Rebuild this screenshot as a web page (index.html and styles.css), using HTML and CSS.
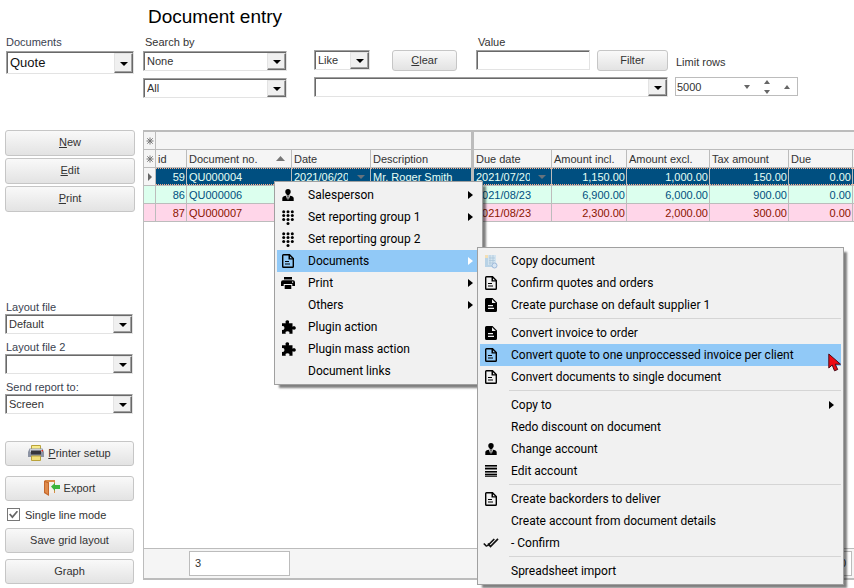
FILE: index.html
```html
<!DOCTYPE html>
<html lang="en">
<head>
<meta charset="utf-8">
<title>Document entry</title>
<link rel="stylesheet" href="styles.css">
</head>
<body>
<svg class="defs" aria-hidden="true">
  <symbol id="i-person" viewBox="0 0 12 12"><circle cx="6" cy="2.7" r="2.7"/><path d="M4.6 5h2.800v1.500H4.600zM.3 12V9.200C.3 7.600 2 7 4 6.700L5.300 11l.4-3-.5-1h1.600l-.5 1 .4 3L8 6.700c2 .3 3.700.9 3.700 2.500V12z"/></symbol>
  <symbol id="i-dots" viewBox="0 0 12 15"><g><circle cx="1.7" cy="1.7" r="1.5"/><circle cx="6" cy="1.7" r="1.5"/><circle cx="10.3" cy="1.7" r="1.5"/><circle cx="1.7" cy="5.6" r="1.5"/><circle cx="6" cy="5.6" r="1.5"/><circle cx="10.3" cy="5.6" r="1.5"/><circle cx="1.7" cy="9.5" r="1.5"/><circle cx="6" cy="9.5" r="1.5"/><circle cx="10.3" cy="9.5" r="1.5"/><circle cx="6" cy="13.4" r="1.5"/></g></symbol>
  <symbol id="i-doc" viewBox="0 0 12 14"><path d="M1.500.7h6l3.800 3.800v8q0 .8-.8.8h-9q-.8 0-.8-.8v-11q0-.8.8-.8z" fill="none" stroke="#000" stroke-width="1.400"/><path d="M6.500 1H8v3.200h3v1.300H6.500zM3 7h4v1H3zM3 9.500h5v1H3z"/></symbol>
  <symbol id="i-docfill" viewBox="0 0 12 14"><path fill-rule="evenodd" d="M1.500 0H7.500L12 4.500V12.500Q12 14 10.500 14H1.500Q0 14 0 12.500V1.500Q0 0 1.500 0zM7 1.200V5h3.800zM3 7v1.200h5V7zM3 9.800V11h6V9.800z"/></symbol>
  <symbol id="i-print" viewBox="0 0 14 12"><path fill-rule="evenodd" d="M3 0h8v2.500H3zM2 3.300h10q2 0 2 2V9h-2.700V7H2.700v2H0V5.300q0-2 2-2zM11 4.500v1.200h1.200V4.500zM3.700 8h6.600v4H3.700z"/></symbol>
  <symbol id="i-puzzle" viewBox="0 0 15 14"><path d="M1 3.200h3.800C4 1.500 4.800.2 6.300.2s2.400 1.300 1.500 3h3.700v3.500c1.800-.9 3.300-.2 3.300 1.300s-1.500 2.200-3.300 1.300v4.500H8.300c.7-1.700-.3-2.500-1.800-2.500s-2.500.8-1.700 2.500H1v-4.100c1.600.6 2.400-.3 2.400-1.700S2.600 5.700 1 6.300z"/></symbol>
  <symbol id="i-lines" viewBox="0 0 12 12"><path d="M0 0h12v1.500H0zM0 3h12v1.500H0zM0 6h12v1.500H0zM0 9h12v1.500H0zM0 11.200h12v.8H0z"/><path d="M0 1.500h12V3H0zM0 7.500h12V9H0z" opacity=".35"/></symbol>
  <symbol id="i-checks" viewBox="0 0 16 10"><path d="M.8 5.500l3 3M5 5.500l2.500 3L15 .8M4.300 8l7-7" fill="none" stroke="#111" stroke-width="1.700"/></symbol>
  <symbol id="i-copy" viewBox="0 0 14 15"><path d="M1 3h8v10H1z" fill="#b9d3e6"/><path d="M4 1h8v10H4z" fill="#d3e4f0"/><path d="M1 1h3v3H1z" fill="#f3dfb5"/><path d="M5 4h6M5 6.500h6M5 9h4M6 1v10M9 1v8" stroke="#a9c4d8" stroke-width=".7"/><circle cx="10.500" cy="11.500" r="2.500" fill="#d8e6f3" stroke="#9db9da"/></symbol>
  <symbol id="i-star" viewBox="0 0 8 8"><path d="M4 .500v7M.5 4h7M1.300 1.300l5.400 5.400M6.700 1.300L1.300 6.700" stroke="#777" stroke-width="1"/></symbol>
</svg>

<div class="app">
  <aside class="sidebar">
    <div class="field field-large">
      <label for="doc">Documents</label>
      <span class="select"><select id="doc"><option>Quote</option></select></span>
    </div>
    <div class="actions">
      <button class="btn"><span><u>N</u>ew</span></button>
      <button class="btn"><span><u>E</u>dit</span></button>
      <button class="btn"><span><u>P</u>rint</span></button>
    </div>
    <div class="layouts">
      <div class="field"><label for="lay1">Layout file</label><span class="select"><select id="lay1"><option>Default</option></select></span></div>
      <div class="field"><label for="lay2">Layout file 2</label><span class="select"><select id="lay2"><option></option></select></span></div>
      <div class="field"><label for="send">Send report to:</label><span class="select"><select id="send"><option>Screen</option></select></span></div>
    </div>
    <div class="output">
      <button class="btn"><svg width="16" height="16" viewBox="0 0 16 16"><path d="M3.500.5h9V5h-9z" fill="#f9ec8c" stroke="#b9a23a"/><path d="M1.500 3.500h13L16 7v5H0V7z" fill="#8c93a3"/><path d="M2 4h12v3H2z" fill="#c9cdd6"/><path d="M3 5.500h10v4H3z" fill="#34343c"/><path d="M13.500 5h1.500v1.500h-1.500z" fill="#e02a1c"/><path d="M3.500 11h9v4.500h-9z" fill="#f1df7a" stroke="#b9a23a"/></svg><span><u>P</u>rinter setup</span></button>
      <button class="btn export"><svg width="16" height="16" viewBox="0 0 16 16"><path d="M1 0h10v13H1z" fill="#d98a45"/><path d="M5 2h5v11H5z" fill="#f4efe8"/><path d="M0 .5l5 2V16l-5-3z" fill="#c4672b"/><path d="M1 2l3 1.200v11L1 12z" fill="#df8b4c"/><path d="M7 6.500L11 3v2h5v4h-5v2z" fill="#3cb53c"/></svg><span>Export</span></button>
      <label class="check"><input type="checkbox" checked><span>Single line mode</span></label>
      <button class="btn save">Save grid layout</button>
      <button class="btn">Graph</button>
    </div>
  </aside>

  <main class="main">
    <h1>Document entry</h1>
    <form class="toolbar">
      <div class="search">
        <label for="by">Search by</label>
        <span class="select"><select id="by"><option>None</option></select></span>
        <span class="select"><select aria-label="Status"><option>All</option></select></span>
      </div>
      <div class="filter">
        <div class="filter-row">
          <span class="select like"><select aria-label="Operator"><option>Like</option></select></span>
          <button type="button" class="btn clear"><span><u>C</u>lear</span></button>
          <div class="value"><label for="val">Value</label><input id="val" type="text" class="sunken"></div>
          <button type="button" class="btn apply">Filter</button>
        </div>
        <span class="select"><select aria-label="Saved filter"><option></option></select></span>
      </div>
      <div class="limit">
        <label for="lim">Limit rows</label>
        <div class="spinner">
          <input id="lim" type="text" value="5000">
          <svg width="8" height="4" viewBox="0 0 8 4"><path d="M1 0h6L4 4z"/></svg>
          <svg width="8" height="14" viewBox="0 0 8 14"><path d="M1 4h6L4 0zM1 10h6l-3 4z"/></svg>
          <svg width="8" height="4" viewBox="0 0 8 4"><path d="M1 4h6L4 0z"/></svg>
        </div>
      </div>
    </form>

    <section class="grid">
      <table>
        <colgroup><col class="c-mark"><col class="c-id"><col class="c-no"><col class="c-date"><col class="c-desc"><col class="c-duedate"><col class="c-incl"><col class="c-excl"><col class="c-tax"><col class="c-due"><col></colgroup>
        <thead>
          <tr><th class="mark"><svg width="8" height="8"><use href="#i-star"/></svg></th><th colspan="4" class="split"></th><th colspan="6"></th></tr>
          <tr><th class="mark"><svg width="8" height="8"><use href="#i-star"/></svg></th><th>id</th><th><div class="sorted">Document no.<svg width="9" height="5" viewBox="0 0 9 5"><path d="M0 5h9L4.500 0z"/></svg></div></th><th>Date</th><th class="split">Description</th><th>Due date</th><th>Amount incl.</th><th>Amount excl.</th><th>Tax amount</th><th>Due</th><th></th></tr>
        </thead>
        <tbody>
          <tr class="selected"><td class="mark"><svg width="4" height="8" viewBox="0 0 4 8"><path d="M0 0v8l4-4z"/></svg></td><td class="num">59</td><td>QU000004</td><td><div class="date"><span>2021/06/20</span><svg width="8" height="4" viewBox="0 0 8 4"><path d="M0 0h8L4 4z"/></svg></div></td><td class="split">Mr. Roger Smith</td><td><div class="date"><span>2021/07/20</span><svg width="8" height="4" viewBox="0 0 8 4"><path d="M0 0h8L4 4z"/></svg></div></td><td class="num">1,150.00</td><td class="num">1,000.00</td><td class="num">150.00</td><td class="num">0.00</td><td></td></tr>
          <tr class="mint"><td class="mark"></td><td class="num">86</td><td>QU000006</td><td></td><td class="split"></td><td>2021/08/23</td><td class="num">6,900.00</td><td class="num">6,000.00</td><td class="num">900.00</td><td class="num">0.00</td><td></td></tr>
          <tr class="pink"><td class="mark"></td><td class="num">87</td><td>QU000007</td><td></td><td class="split"></td><td>2021/08/23</td><td class="num">2,300.00</td><td class="num">2,000.00</td><td class="num">300.00</td><td class="num">0.00</td><td></td></tr>
        </tbody>
      </table>
      <footer class="totals"><output class="count">3</output><output class="sum">0</output></footer>
    </section>
  </main>

  <div class="menu context" role="menu">
    <button class="item" role="menuitem"><i><svg width="12" height="12"><use href="#i-person"/></svg></i>Salesperson<b></b></button>
    <button class="item" role="menuitem"><i><svg width="12" height="15"><use href="#i-dots"/></svg></i>Set reporting group 1<b></b></button>
    <button class="item" role="menuitem"><i><svg width="12" height="15"><use href="#i-dots"/></svg></i>Set reporting group 2</button>
    <button class="item active" role="menuitem"><i><svg width="12" height="14"><use href="#i-doc"/></svg></i>Documents<b></b></button>
    <button class="item" role="menuitem"><i><svg width="14" height="12"><use href="#i-print"/></svg></i>Print<b></b></button>
    <button class="item" role="menuitem"><i></i>Others<b></b></button>
    <button class="item" role="menuitem"><i><svg width="15" height="14"><use href="#i-puzzle"/></svg></i>Plugin action</button>
    <button class="item" role="menuitem"><i><svg width="15" height="14"><use href="#i-puzzle"/></svg></i>Plugin mass action</button>
    <button class="item" role="menuitem"><i></i>Document links</button>
  </div>

  <div class="menu submenu" role="menu">
    <button class="item" role="menuitem"><i><svg width="14" height="15"><use href="#i-copy"/></svg></i>Copy document</button>
    <button class="item" role="menuitem"><i><svg width="12" height="14"><use href="#i-doc"/></svg></i>Confirm quotes and orders</button>
    <button class="item" role="menuitem"><i><svg width="12" height="14"><use href="#i-docfill"/></svg></i>Create purchase on default supplier 1</button>
    <hr>
    <button class="item" role="menuitem"><i><svg width="12" height="14"><use href="#i-docfill"/></svg></i>Convert invoice to order</button>
    <button class="item active" role="menuitem"><i><svg width="12" height="14"><use href="#i-doc"/></svg></i>Convert quote to one unproccessed invoice per client</button>
    <button class="item" role="menuitem"><i><svg width="12" height="14"><use href="#i-doc"/></svg></i>Convert documents to single document</button>
    <hr>
    <button class="item" role="menuitem"><i></i>Copy to<b></b></button>
    <button class="item" role="menuitem"><i></i>Redo discount on document</button>
    <button class="item" role="menuitem"><i><svg width="12" height="12"><use href="#i-person"/></svg></i>Change account</button>
    <button class="item" role="menuitem"><i><svg width="12" height="12"><use href="#i-lines"/></svg></i>Edit account</button>
    <hr>
    <button class="item" role="menuitem"><i><svg width="12" height="14"><use href="#i-doc"/></svg></i>Create backorders to deliver</button>
    <button class="item" role="menuitem"><i></i>Create account from document details</button>
    <button class="item" role="menuitem"><i><svg width="16" height="10"><use href="#i-checks"/></svg></i>- Confirm</button>
    <hr>
    <button class="item" role="menuitem"><i></i>Spreadsheet import</button>
  </div>

  <svg class="pointer" width="14" height="20" viewBox="0 0 14 20"><path d="M.8 1v14l3.400-3 2.300 5.800 3.200-1.300-2.500-5.300H12.500z" fill="#f00a14" stroke="#4a0a18" stroke-width="1"/></svg>
</div>
</body>
</html>
```
FILE: styles.css
```css
* { box-sizing: border-box; }

body {
  margin: 0;
  background: #fff;
  color: #333;
  font: 11px/14px "Liberation Sans", Arial, sans-serif;
}

button, input, select {
  font: inherit;
  color: inherit;
  margin: 0;
}

.defs { position: absolute; width: 0; height: 0; }

.app {
  position: relative;
  display: flex;
  min-height: 100vh;
  overflow: hidden;
}

/* Controls */
.btn {
  display: flex;
  align-items: center;
  justify-content: center;
  gap: 4px;
  width: 100%;
  height: 25px;
  padding: 0 0 2px;
  border: 1px solid #c6c6c6;
  border-radius: 3px;
  background: linear-gradient(#f9f9f9, #e3e3e3);
}

.select { position: relative; display: block; height: 20px; }

.select select, .sunken {
  display: block;
  width: 100%;
  height: 100%;
  padding: 0 20px 0 3px;
  appearance: none;
  background: #fff;
  border: 1px solid #e3e3e3;
  border-top-color: #a0a0a0;
  border-left-color: #a0a0a0;
  border-radius: 0;
  box-shadow: inset 1px 1px #696969;
}

.select::before {
  content: "";
  position: absolute;
  top: 2px;
  right: 1px;
  bottom: 1px;
  width: 17px;
  background: #f0f0f0;
  border: 1px solid #e3e3e3;
  border-right-color: #696969;
  border-bottom-color: #696969;
  box-shadow: inset -1px -1px #a0a0a0;
  pointer-events: none;
}

.select::after {
  content: "";
  position: absolute;
  top: calc(50% - 1px);
  right: 6px;
  border: 4px solid transparent;
  border-top-color: #000;
  border-bottom: 0;
  pointer-events: none;
}

/* Sidebar */
.sidebar {
  display: flex;
  flex-direction: column;
  flex: 0 0 143px;
  padding: 34px 8px 0 5px;
}

.field label { display: block; padding-left: 1px; color: #3a4250; }
.field .select { width: 128px; }
.field-large label { line-height: 17px; }
.field-large .select { height: 23px; font-size: 13px; color: #111; }
.field-large { padding-left: 1px; }
.field-large label { padding-left: 0; }

.actions { display: grid; gap: 2px; margin-top: 56px; }
.actions .btn { height: 26px; }
.layouts { display: grid; gap: 6px; margin-top: 88px; }
.output { margin-top: 27px; padding-right: 1px; }
.export { margin-top: 10px; }
.save { margin-bottom: 6px; }

.check {
  display: flex;
  align-items: center;
  gap: 5px;
  height: 27px;
  padding-left: 2px;
}

.check input {
  display: grid;
  place-items: center;
  width: 13px;
  height: 13px;
  appearance: none;
  border: 1px solid #777;
  background: #fff;
}

.check input::before {
  content: "";
  width: 9px;
  height: 8px;
  background: #666;
  clip-path: polygon(0 50%, 15% 38%, 38% 65%, 88% 0, 100% 15%, 38% 100%);
}

/* Search toolbar */
.main {
  display: flex;
  flex: 1;
  flex-direction: column;
  min-width: 0;
  padding-bottom: 8px;
}

h1 {
  margin: 0;
  padding-left: 5px;
  font-size: 19px;
  font-weight: 400;
  line-height: 34px;
  color: #000;
}

.toolbar { display: flex; align-items: flex-start; height: 64px; }
.search { width: 144px; margin-right: 27px; }
.search label { display: block; padding-left: 2px; line-height: 17px; }
.search .select + .select { margin-top: 7px; }
.filter { width: 354px; margin-right: 7px; }
.filter-row { display: flex; height: 43px; }
.filter-row .btn { height: 21px; margin-top: 16px; }
.like { width: 56px; margin: 16px 22px 0 0; }
.clear { width: 65px; }
.value { flex: 1; margin: 0 7px 0 19px; }
.value label { display: block; padding-left: 2px; line-height: 16px; }
.value .sunken { height: 20px; padding: 0 3px; }
.apply { width: 71px; }
.limit { width: 123px; padding-top: 20px; }
.limit label { display: block; padding-left: 1px; line-height: 16px; }

.spinner {
  display: flex;
  align-items: center;
  gap: 12px;
  height: 19px;
  margin-top: 7px;
  padding-right: 6px;
  border: 1px solid #bcbcbc;
}

.spinner input { flex: 1; min-width: 0; padding: 0 1px; border: 0; background: none; }
.spinner svg { flex: none; fill: #666; }

/* Document grid */
.grid {
  display: flex;
  flex: 1;
  flex-direction: column;
  margin-top: 32px;
  border: solid #bcbcbc;
  border-width: 2px 0 2px 1px;
}

table {
  width: 100%;
  table-layout: fixed;
  border-collapse: separate;
  border-spacing: 0;
}

.c-mark { width: 12px; }
.c-id { width: 31px; }
.c-no { width: 105px; }
.c-date { width: 79px; }
.c-desc { width: 103px; }
.c-duedate { width: 78px; }
.c-incl { width: 75px; }
.c-excl { width: 83px; }
.c-tax { width: 79px; }
.c-due { width: 64px; }

th, td {
  height: 18px;
  padding: 0 2px;
  border: solid #bcbcbc;
  border-width: 0 1px 1px 0;
  font-weight: 400;
  line-height: 14px;
  text-align: left;
  white-space: nowrap;
  overflow: hidden;
}

th { background: #f5f5f5; }
th:last-child, td:last-child { border-right: 0; padding: 0; }
.split { border-right-width: 3px; }
.num { padding-right: 1px; text-align: right; }
.mark, td.mark { padding: 0; background: #f5f5f5; text-align: center; }
.mark svg { display: block; margin: auto; fill: #666; }

.sorted, .date { display: flex; align-items: center; justify-content: space-between; }
.sorted svg { margin-right: 4px; fill: #777; }
.date span { width: 54px; overflow: hidden; }
.date svg { margin-right: 3px; fill: #66727c; }

.selected td:not(.mark) {
  background: repeating-linear-gradient(90deg, #ffb08a 0 1px, #004f80 1px 2px) top / 100% 1px no-repeat,
    repeating-linear-gradient(90deg, #ffb08a 0 1px, #004f80 1px 2px) bottom / 100% 1px no-repeat,
    #004f80;
  color: #e6fff4;
}

.mint td { background: #dcffee; color: #004f80; }
.pink td { background: #ffd6e9; color: #8a1500; }

.totals {
  display: flex;
  justify-content: space-between;
  height: 30px;
  margin-top: auto;
  padding: 2px 2px 2px 45px;
  border-top: 1px solid #bcbcbc;
  background: #f5f5f5;
}

.totals output {
  width: 101px;
  height: 25px;
  padding: 0 5px;
  border: 1px solid #bcbcbc;
  background: #fff;
  line-height: 23px;
}

.totals .sum { width: 64px; text-align: right; }

/* Menus */
.menu {
  position: absolute;
  padding: 2px;
  border: 1px solid #a0a0a0;
  background: #f1f1f1;
  box-shadow: 4px 4px 2px -1px rgba(0, 0, 0, .5);
  color: #000;
  font: 12px/22px Roboto, "Open Sans", sans-serif;
}

.context { left: 274px; top: 181px; width: 209px; }
.submenu { left: 477px; top: 247px; width: 367px; }

.item {
  display: flex;
  align-items: center;
  width: 100%;
  height: 22px;
  padding: 0 7px 0 0;
  border: 0;
  background: none;
  text-align: left;
  white-space: nowrap;
}

.item.active { background: #91c9f7; }

.item i {
  display: flex;
  justify-content: center;
  width: 22px;
  margin-right: 9px;
}

.item b {
  margin-left: auto;
  border: 4px solid transparent;
  border-left: 5px solid #000;
  border-right: 0;
}

.item.active b { border-left-color: #fff; }

.menu hr {
  height: 1px;
  margin: 2px 0 3px 29px;
  border: 0;
  background: #d5d5d5;
}

.pointer { position: absolute; left: 828px; top: 353px; }
```
